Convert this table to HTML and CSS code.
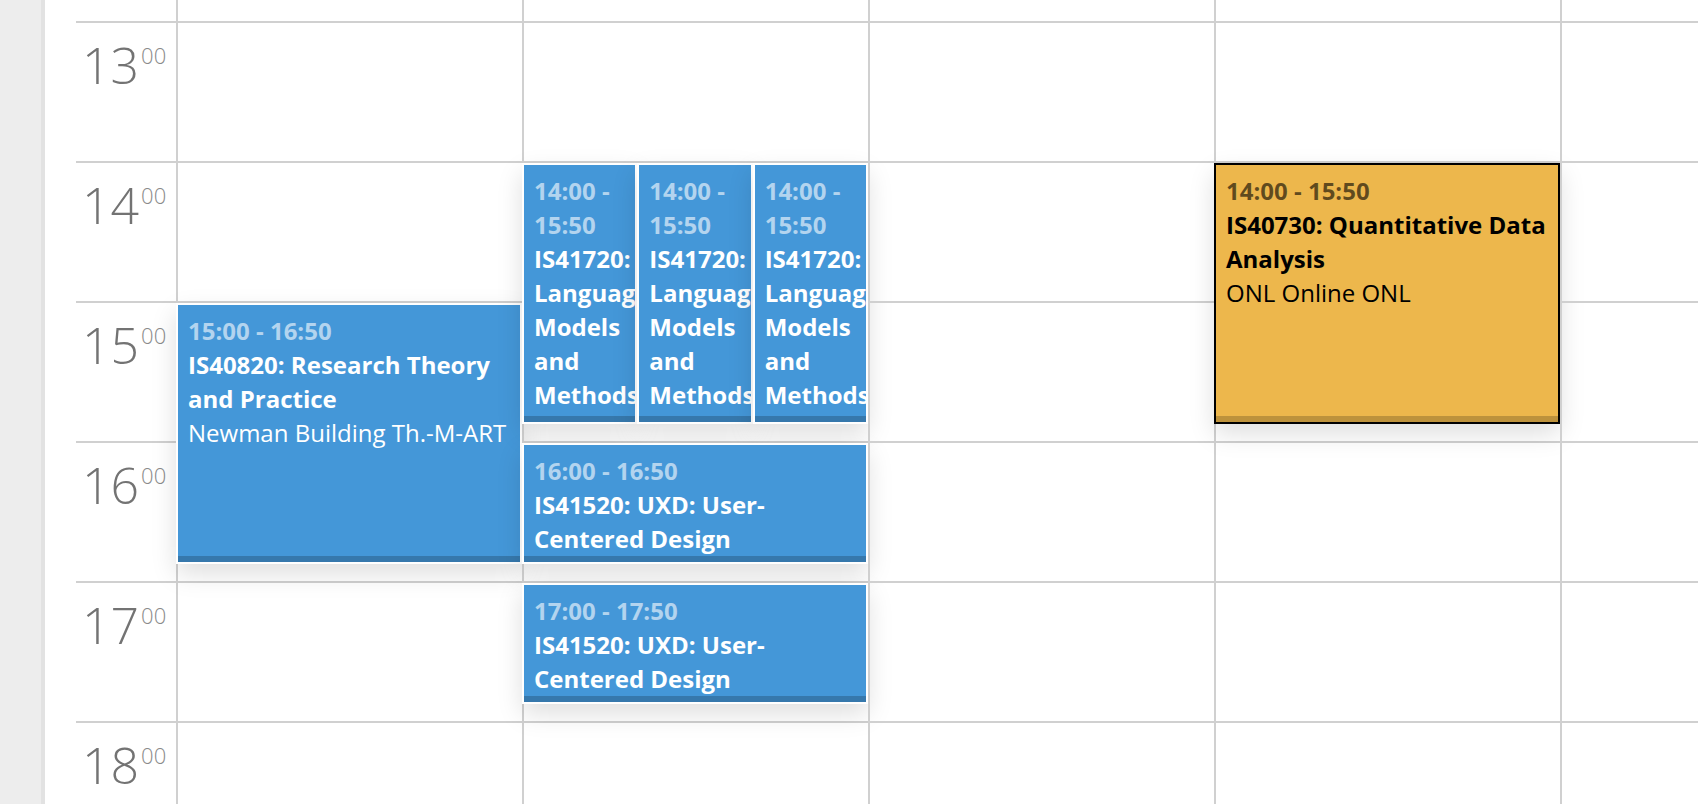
FILE: index.html
```html
<!DOCTYPE html>
<html lang="en">
<head>
<meta charset="utf-8">
<title>Timetable</title>
<link rel="stylesheet" href="styles.css">
</head>
<body>
<div class="app">
  <aside class="sidebar"></aside>
  <main class="calendar">
    <div class="week">
      <div class="gutter">
        <div class="hour"></div>
        <div class="hour"><span class="hour-num">13</span><span class="hour-min">00</span></div>
        <div class="hour"><span class="hour-num">14</span><span class="hour-min">00</span></div>
        <div class="hour"><span class="hour-num">15</span><span class="hour-min">00</span></div>
        <div class="hour"><span class="hour-num">16</span><span class="hour-min">00</span></div>
        <div class="hour"><span class="hour-num">17</span><span class="hour-min">00</span></div>
        <div class="hour"><span class="hour-num">18</span><span class="hour-min">00</span></div>
      </div>

      <div class="day">
        <div class="slot"></div><div class="slot"></div><div class="slot"></div><div class="slot"></div><div class="slot"></div><div class="slot"></div><div class="slot"></div>
        <div class="event blue" style="top:422px;height:260.67px;left:0;width:346px">
          <div class="time">15:00 - 16:50</div>
          <div class="title">IS40820: Research Theory and Practice</div>
          <div class="loc">Newman Building Th.-M-ART</div>
        </div>
      </div>

      <div class="day">
        <div class="slot"></div><div class="slot"></div><div class="slot"></div><div class="slot"></div><div class="slot"></div><div class="slot"></div><div class="slot"></div>
        <div class="event blue" style="top:282px;height:260.67px;left:0;width:115.33px">
          <div class="time">14:00 - 15:50</div>
          <div class="title">IS41720: Language Models and Methods</div>
        </div>
        <div class="event blue" style="top:282px;height:260.67px;left:115.33px;width:115.33px">
          <div class="time">14:00 - 15:50</div>
          <div class="title">IS41720: Language Models and Methods</div>
        </div>
        <div class="event blue" style="top:282px;height:260.67px;left:230.67px;width:115.33px">
          <div class="time">14:00 - 15:50</div>
          <div class="title">IS41720: Language Models and Methods</div>
        </div>
        <div class="event blue" style="top:562px;height:120.67px;left:0;width:346px">
          <div class="time">16:00 - 16:50</div>
          <div class="title">IS41520: UXD: User-Centered Design</div>
        </div>
        <div class="event blue" style="top:702px;height:120.67px;left:0;width:346px">
          <div class="time">17:00 - 17:50</div>
          <div class="title">IS41520: UXD: User-Centered Design</div>
        </div>
      </div>

      <div class="day">
        <div class="slot"></div><div class="slot"></div><div class="slot"></div><div class="slot"></div><div class="slot"></div><div class="slot"></div><div class="slot"></div>
      </div>

      <div class="day">
        <div class="slot"></div><div class="slot"></div><div class="slot"></div><div class="slot"></div><div class="slot"></div><div class="slot"></div><div class="slot"></div>
        <div class="event yellow" style="top:282px;height:260.67px;left:0;width:346px">
          <div class="time">14:00 - 15:50</div>
          <div class="title">IS40730: Quantitative Data Analysis</div>
          <div class="loc">ONL Online ONL</div>
        </div>
      </div>

      <div class="day">
        <div class="slot"></div><div class="slot"></div><div class="slot"></div><div class="slot"></div><div class="slot"></div><div class="slot"></div><div class="slot"></div>
      </div>
    </div>
  </main>
</div>
</body>
</html>
```

FILE: styles.css
```css
html, body {
  margin: 0;
  height: 100%;
}

body {
  font-family: "Open Sans", "Noto Sans", "Liberation Sans", sans-serif;
  overflow: hidden;
  background: #ffffff;
}

.app {
  display: flex;
  height: 100vh;
}

.sidebar {
  flex: none;
  width: 41px;
  background: #ededed;
  border-right: 4px solid #e2e2e2;
}

.calendar {
  flex: 1;
  min-width: 0;
  overflow: hidden;
  background: #ffffff;
}

.week {
  display: flex;
  margin-top: -119px;
}

.gutter {
  flex: none;
  width: 131px;
}

.hour {
  display: flex;
  align-items: flex-start;
  box-sizing: border-box;
  height: 140px;
  margin-left: 31px;
  padding: 17px 0 0 6px;
  border-top: 2px solid #d0d0d0;
}

.hour-num {
  font-size: 50px;
  line-height: 50px;
  font-weight: 300;
  color: #737373;
}

.hour-min {
  font-size: 22px;
  line-height: 22px;
  font-weight: 300;
  color: #8a8a8a;
  margin: 4px 0 0 2px;
}

.day {
  flex: none;
  position: relative;
  width: 346px;
  box-shadow: inset 2px 0 0 #d0d0d0;
}

.slot {
  height: 138px;
  border-top: 2px solid #d0d0d0;
}

.event {
  position: absolute;
  box-sizing: border-box;
  border: 2px solid #ffffff;
  padding: 9px 10px 0 10px;
  overflow: hidden;
  font-size: 24px;
  line-height: 34px;
  box-shadow: inset 0 -6px 0 rgba(0, 0, 0, 0.2), 0 10px 24px rgba(0, 0, 0, 0.13);
}

.event .time,
.event .title {
  font-weight: 700;
}

.event .loc {
  font-weight: 400;
}

.blue {
  background: #4497d8;
  color: #ffffff;
}

.blue .time {
  color: rgba(255, 255, 255, 0.6);
}

.yellow {
  background: #edb74c;
  border-color: #000000;
  color: #000000;
}

.yellow .time {
  color: rgba(0, 0, 0, 0.6);
}
```
